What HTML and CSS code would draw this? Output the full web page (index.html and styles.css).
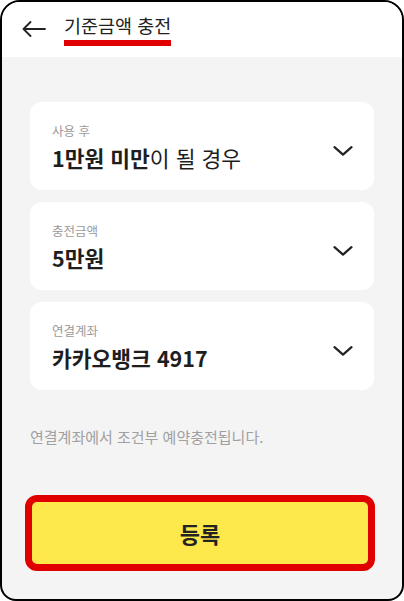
FILE: index.html
```html
<!DOCTYPE html>
<html lang="ko">
<head>
    <meta charset="UTF-8">
    <title>기준금액 충전</title>
    <link rel="stylesheet" href="styles.css">
</head>
<body>
<div class="phone">
    <div class="topBar">
        <a class="btnBack">
            <svg width="24" height="16" viewBox="0 0 24 16"><path d="M1.5 8H23M8.5 1L1.5 8l7 7" fill="none" stroke="#222" stroke-width="1.8" stroke-linecap="round" stroke-linejoin="round"/></svg>
        </a>
        <h1 class="title">기준금액 충전</h1>
    </div>
    <div class="content">
        <div class="selBox">
            <div class="selText">
                <p class="selLabel">사용 후</p>
                <p class="selValue"><b>1만원 미만</b>이 될 경우</p>
            </div>
            <svg class="arrowDown" width="20" height="10" viewBox="0 0 20 10"><path d="M1.5 1.2L10 8.6l8.5-7.4" fill="none" stroke="#222" stroke-width="2.2" stroke-linecap="round" stroke-linejoin="round"/></svg>
        </div>
        <div class="selBox">
            <div class="selText">
                <p class="selLabel">충전금액</p>
                <p class="selValue"><b>5만원</b></p>
            </div>
            <svg class="arrowDown" width="20" height="10" viewBox="0 0 20 10"><path d="M1.5 1.2L10 8.6l8.5-7.4" fill="none" stroke="#222" stroke-width="2.2" stroke-linecap="round" stroke-linejoin="round"/></svg>
        </div>
        <div class="selBox">
            <div class="selText">
                <p class="selLabel">연결계좌</p>
                <p class="selValue"><b>카카오뱅크 4917</b></p>
            </div>
            <svg class="arrowDown" width="20" height="10" viewBox="0 0 20 10"><path d="M1.5 1.2L10 8.6l8.5-7.4" fill="none" stroke="#222" stroke-width="2.2" stroke-linecap="round" stroke-linejoin="round"/></svg>
        </div>
        <p class="notice">연결계좌에서 조건부 예약충전됩니다.</p>
    </div>
    <a class="btnSubmit">등록</a>
</div>
</body>
</html>
```

FILE: styles.css
```css
*{box-sizing:border-box;}
body{margin:0;background:#fff;font-family:"Noto Sans CJK KR","Noto Sans",sans-serif;color:#1e1e1e;}
p{margin:0;}
.phone{width:404px;height:601px;border:2px solid #000;border-radius:20px 20px 16px 16px;overflow:hidden;background:#f4f4f5;display:flex;flex-direction:column;}

/* 상단 바 */
.topBar{height:55px;flex-shrink:0;background:#fff;display:flex;align-items:center;padding:0 0 0 20px;}
.btnBack{display:flex;width:24px;height:16px;margin-top:-2px;cursor:pointer;}
.title{margin:0 0 0 18px;font-size:18.5px;font-weight:400;line-height:24px;color:#222;padding:0 0 3px;border-bottom:6px solid #e00000;}

/* 선택 박스 */
.content{padding:45px 28px 0;}
.selBox{height:88px;background:#fff;border-radius:12px;display:flex;align-items:center;padding:0 22px;margin-bottom:12px;}
.selText{flex:1;padding-top:1px;}
.selLabel{font-size:12.5px;line-height:18px;color:#9a9a9a;}
.selValue{font-size:21.5px;line-height:28px;margin-top:4px;}
.selValue b{font-weight:700;}
.arrowDown{margin:9px -1px 0 0;}
.notice{margin-top:36px;font-size:15px;line-height:21px;color:#a0a0a0;}

/* 등록 버튼 */
.btnSubmit{display:flex;align-items:center;justify-content:center;height:76px;margin:auto 27px 28px 23px;background:#fde94b;border:7px solid #e00000;border-radius:12px;font-size:22px;font-weight:700;color:#222;cursor:pointer;}
```
